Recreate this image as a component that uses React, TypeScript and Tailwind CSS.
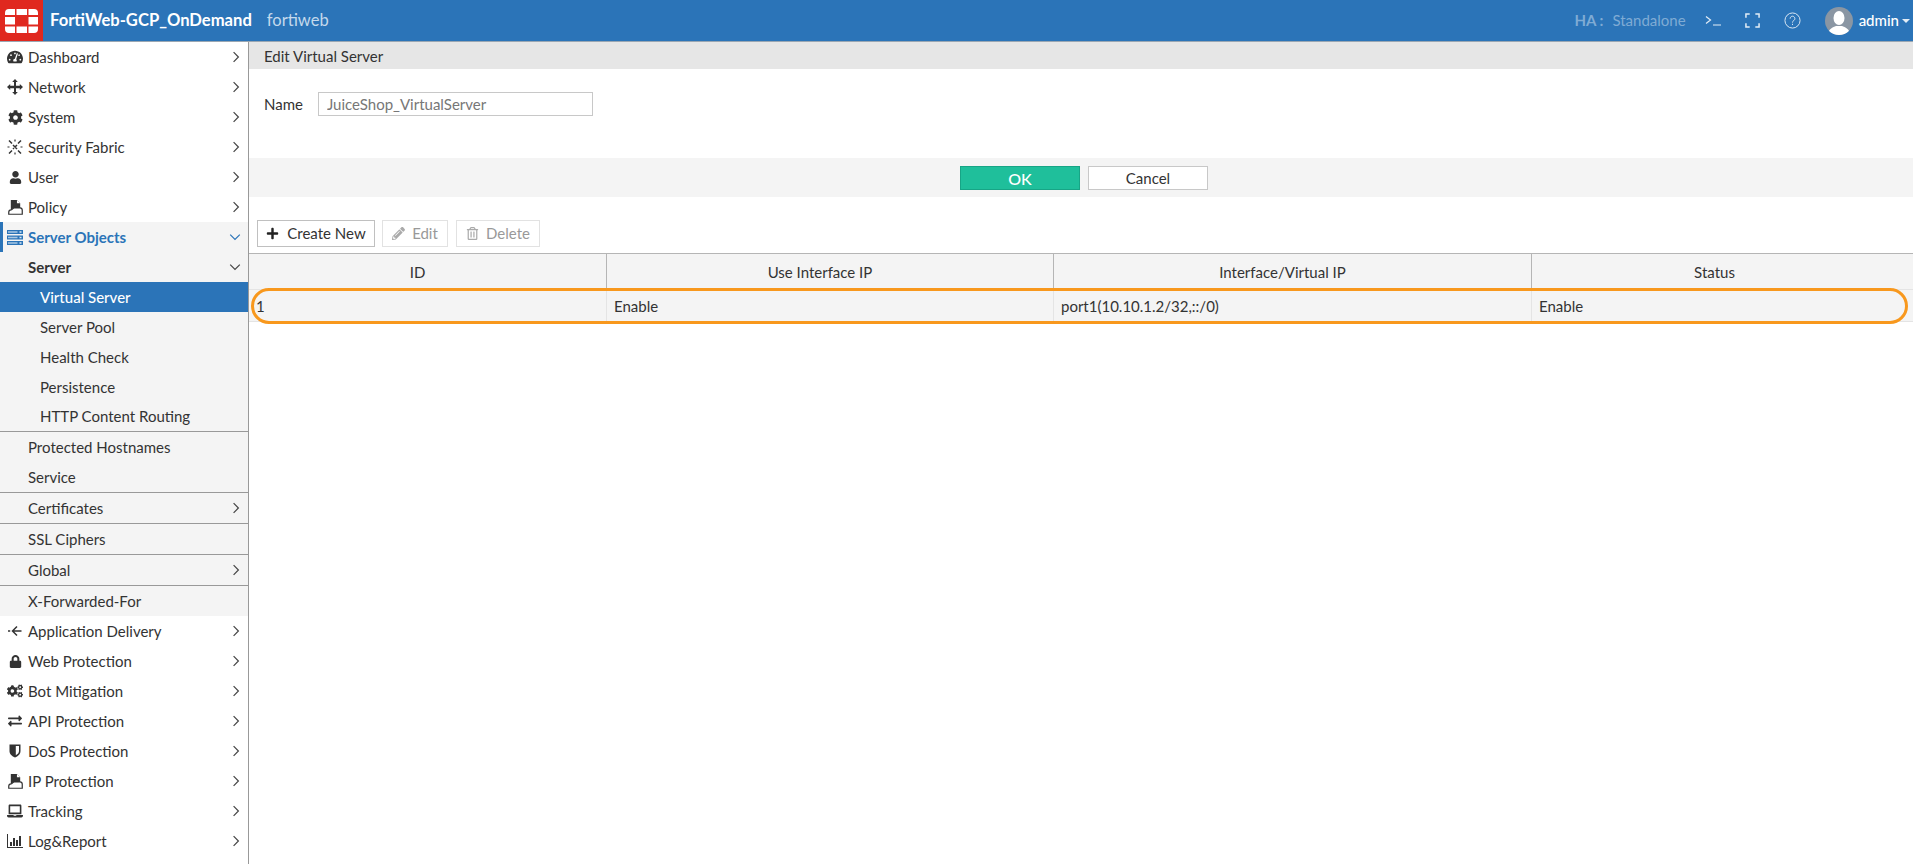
import React from "react";
import {
  FaCog,
  FaCogs,
  FaExchangeAlt,
  FaLaptop,
  FaLock,
  FaPencilAlt,
  FaPlus,
  FaRegTrashAlt,
  FaTachometerAlt,
  FaUser,
} from "react-icons/fa";

const Chevron = ({ down, className }: { down?: boolean; className?: string }) => (
  <svg viewBox="0 0 10 10" className={`w-[12px] h-[12px] ${className ?? "text-[#444]"}`} fill="none" stroke="currentColor" strokeWidth="1">
    {down ? <path d="M1 3l4 4 4-4" /> : <path d="M3 1l4 4-4 4" />}
  </svg>
);

const NetworkIcon = () => (
  <svg viewBox="0 0 16 16" className="w-[16px] h-[16px]" fill="#333">
    <path d="M8 0l2.800 3H9v3.800h3.800V5L16 8l-3.200 3V9.200H9V13h1.800L8 16l-2.800-3H7V9.200H3.200V11L0 8l3.200-3v1.800H7V3H5.200z" />
  </svg>
);

const FabricIcon = () => (
  <svg viewBox="0 0 16 16" className="w-[16px] h-[16px]" fill="none" stroke="#333" strokeWidth="1.500">
    <path d="M2 1.500l3 3M14 1.500l-3 3M2 14.500l3-3M14 14.500l-3-3M6 6l4 4M10 6l-2 2M6 10l1-1" />
    <path d="M8 .5v2M8 13.500v2M.5 8h2M13.500 8h2" strokeWidth="1.200" />
  </svg>
);

const PolicyIcon = () => (
  <svg viewBox="0 0 16 16" className="w-[15px] h-[15px]">
    <path d="M3 0h6.500L13 3.500V9H6.500C5.500 9 4.500 9.500 3 10.500z" fill="#333" />
    <path d="M9.500 0v3.500H13" fill="#fff" />
    <path d="M.8 15.200V13c0-1.500 1-2.500 2.500-2.500 1 0 2-2 3.500-2h6c1.500 0 2.400 1 2.400 2.500v4.200z" fill="#fff" stroke="#333" strokeWidth="1.300" />
  </svg>
);

const ServerIcon = () => (
  <svg viewBox="0 0 16 15" className="w-[16px] h-[15px]" fill="#2b74b8">
    <path d="M0 0h16v4H0zM0 5.500h16v4H0zM0 11h16v4H0z" />
    <path d="M1 1.300h9.500v1.400H1zM1 6.800h9.500v1.400H1zM1 12.300h9.500v1.400H1z" fill="#a9c8e4" />
    <path d="M12.500 1.300h2v1.400h-2zM12.500 6.800h2v1.400h-2zM12.500 12.300h2v1.400h-2z" fill="#dce8f3" />
  </svg>
);

const DeliveryIcon = () => (
  <svg viewBox="0 0 14 12" className="w-[14px] h-[12px]" fill="none" stroke="#333" strokeWidth="1.500">
    <path d="M0 6h2.200" />
    <path d="M13.500 6H5M9 1.500L4.500 6 9 10.500" />
  </svg>
);

const ShieldIcon = () => (
  <svg viewBox="0 0 12 14" className="w-[12px] h-[14px]">
    <path d="M.5 .5h11v6.500c0 3.200-2.600 5.400-5.500 6.500C3.100 12.400.5 10.200.5 7z" fill="#333" />
    <path d="M6.800 2h3.200v5c0 1.800-1.300 3.200-3.200 4.200z" fill="#fff" />
  </svg>
);

const ReportIcon = () => (
  <svg viewBox="0 0 16 14" className="w-[16px] h-[14px]" fill="#333">
    <path d="M0 0h1v13h15v1H0z" />
    <path d="M3 8h2v4H3zM6 4h2v8H6zM9 6h2v6H9zM12 2h2v10h-2z" />
  </svg>
);

const Logo = () => (
  <svg viewBox="0 0 33 24" className="w-[33px] h-[24px]" fill="#fff">
    <path d="M11.500 0h10.500v6H11.500zM11.500 17.500h10.500V24H11.500z" />
    <path d="M4 0h6v6H0V4a4 4 0 0 1 4-4zM23.500 0h5.500a4 4 0 0 1 4 4v2h-9.500zM0 17.500h10V24H4a4 4 0 0 1-4-4zM23.500 17.500H33V20a4 4 0 0 1-4 4h-5.500z" />
    <path d="M0 8h10v7.500H0zM23.500 8H33v7.500h-9.500z" />
  </svg>
);

type NavItem = { label: string; icon?: React.ReactNode };

const topItems: NavItem[] = [
  { label: "Dashboard", icon: <FaTachometerAlt className="text-[16px] text-[#333]" /> },
  { label: "Network", icon: <NetworkIcon /> },
  { label: "System", icon: <FaCog className="text-[15px] text-[#333]" /> },
  { label: "Security Fabric", icon: <FabricIcon /> },
  { label: "User", icon: <FaUser className="text-[13px] text-[#333]" /> },
  { label: "Policy", icon: <PolicyIcon /> },
];

const bottomItems: NavItem[] = [
  { label: "Application Delivery", icon: <DeliveryIcon /> },
  { label: "Web Protection", icon: <FaLock className="text-[13px] text-[#333]" /> },
  { label: "Bot Mitigation", icon: <FaCogs className="text-[16px] text-[#333]" /> },
  { label: "API Protection", icon: <FaExchangeAlt className="text-[14px] text-[#333]" /> },
  { label: "DoS Protection", icon: <ShieldIcon /> },
  { label: "IP Protection", icon: <PolicyIcon /> },
  { label: "Tracking", icon: <FaLaptop className="text-[16px] text-[#333]" /> },
  { label: "Log&Report", icon: <ReportIcon /> },
];

const NavRow = ({ item }: { item: NavItem }) => (
  <div className="h-[30px] flex items-center text-[#333]">
    <span className="w-[28px] pl-[7px] pr-[5px] flex items-center justify-center">{item.icon}</span>
    <span className="flex-1">{item.label}</span>
    <Chevron className="text-[#444] mr-[6px]" />
  </div>
);

const SubRow = ({ label }: { label: string }) => (
  <div className="h-[30px] flex items-center pl-[40px] text-[#333]">{label}</div>
);

const LevelRow = ({ label, arrow, border }: { label: string; arrow?: boolean; border?: boolean }) => (
  <div className={`h-[30px] box-content flex items-center pl-[28px] pr-[6px] text-[#333] ${border ? "border-b border-[#999]" : ""}`}>
    <span className="flex-1">{label}</span>
    {arrow && <Chevron />}
  </div>
);

const Sidebar = () => (
  <aside className="w-[249px] shrink-0 border-r border-[#999] bg-white overflow-hidden">
    {topItems.map((item) => (
      <NavRow key={item.label} item={item} />
    ))}
    <div className="bg-[#f4f4f4]">
      <div className="h-[30px] flex items-center border-l-[3px] border-[#2b74b8] text-[#2b74b8] font-bold">
        <span className="w-[25px] pl-[4px] flex items-center">
          <ServerIcon />
        </span>
        <span className="flex-1">Server Objects</span>
        <Chevron down className="text-[#2b74b8] mr-[7px]" />
      </div>
      <div className="h-[30px] flex items-center pl-[28px] pr-[7px] font-bold text-[#333]">
        <span className="flex-1">Server</span>
        <Chevron down />
      </div>
      <div className="h-[30px] flex items-center pl-[40px] bg-[#2b74b8] text-white font-medium">Virtual Server</div>
      <SubRow label="Server Pool" />
      <SubRow label="Health Check" />
      <SubRow label="Persistence" />
      <div className="h-[30px] flex items-center pl-[40px] text-[#333] border-b border-[#999]">HTTP Content Routing</div>
      <LevelRow label="Protected Hostnames" />
      <LevelRow label="Service" border />
      <LevelRow label="Certificates" arrow border />
      <LevelRow label="SSL Ciphers" border />
      <LevelRow label="Global" arrow border />
      <LevelRow label="X-Forwarded-For" />
    </div>
    {bottomItems.map((item) => (
      <NavRow key={item.label} item={item} />
    ))}
  </aside>
);

const Header = () => (
  <header className="h-[42px] shrink-0 flex items-center bg-[#2b74b8] border-b border-[#9aa7b3] text-white">
    <div className="w-[43px] h-full bg-[#e0281f] flex items-center justify-center">
      <Logo />
    </div>
    <span className="ml-[7px] text-[16.6px] font-bold">FortiWeb-GCP_OnDemand</span>
    <span className="ml-[15px] text-[16.5px] text-[#c4d9ec]">fortiweb</span>
    <div className="ml-auto flex items-center">
      <span className="text-[15px] text-[#7fabd4] font-bold">HA :</span>
      <span className="ml-[9px] text-[15px] text-[#7fabd4]">Standalone</span>
      <svg viewBox="0 0 16 10" className="ml-[19px] w-[16px] h-[10px]" fill="none" stroke="#e3edf6" strokeWidth="1.200">
        <path d="M1 .5L5.500 4 1 7.500M8 9h8" />
      </svg>
      <svg viewBox="0 0 16 16" className="ml-[24px] w-[15px] h-[15px]" fill="none" stroke="#e3edf6" strokeWidth="1.600">
        <path d="M1 5V1h4M11 1h4v4M15 11v4h-4M5 15H1v-4" />
      </svg>
      <svg viewBox="0 0 18 18" className="ml-[24px] w-[17px] h-[17px]" fill="none" stroke="#e3edf6" strokeWidth="1">
        <circle cx="9" cy="9" r="8" />
        <path d="M6.500 7a2.500 2.500 0 1 1 3.800 2.100C9.400 9.700 9 10.200 9 11.200M9 12.500v1.300" />
      </svg>
      <span className="ml-[24px] w-[28px] h-[28px] rounded-full bg-[#8a96a3] overflow-hidden flex items-center justify-center">
        <svg viewBox="0 0 28 28" className="w-[28px] h-[28px]" fill="#fff">
          <ellipse cx="14" cy="11" rx="5.500" ry="7" />
          <path d="M3 28c0-6 5-8 8-9h6c3 1 8 3 8 9z" />
        </svg>
      </span>
      <span className="ml-[6px] text-[15px] font-medium">admin</span>
      <span className="ml-[3px] mr-[3px] w-0 h-0 border-x-[4px] border-x-transparent border-t-[4px] border-t-[#e3edf6]" />
    </div>
  </header>
);

const columns = [
  { title: "ID", value: "1", width: "w-[358px]", headPad: "pr-[20px]" },
  { title: "Use Interface IP", value: "Enable", width: "w-[447px]", headPad: "pr-[20px]" },
  { title: "Interface/Virtual IP", value: "port1(10.10.1.2/32,::/0)", width: "w-[478px]", headPad: "pr-[20px]" },
  { title: "Status", value: "Enable", width: "flex-1", headPad: "pr-[16px]" },
];

const Table = () => (
  <div className="mt-[6px]">
    <div className="flex h-[36px] bg-[#f4f4f4] border-t border-[#b5b5b5]">
      {columns.map((c, i) => (
        <div key={c.title} className={`${c.width} ${c.headPad} flex items-center justify-center pt-[2px] ${i < 3 ? "border-r border-[#b5b5b5]" : ""}`}>
          {c.title}
        </div>
      ))}
    </div>
    <div className="relative flex h-[33px] bg-[#f4f4f4] border-y border-[#e4e4e4]">
      {columns.map((c, i) => (
        <div key={c.title} className={`${c.width} flex items-center pl-[7px] pt-[2px] ${i < 3 ? "border-r border-[#e4e4e4]" : ""}`}>
          {c.value}
        </div>
      ))}
      <div className="absolute left-[2px] right-[5px] top-[-2px] bottom-[-3px] rounded-full border-[3.5px] border-[#f8981d]" />
    </div>
  </div>
);

export default function App() {
  return (
    <div className="w-[1913px] h-[864px] flex flex-col overflow-hidden bg-white text-[15px] text-[#333] font-['Lato','Liberation_Sans',sans-serif]">
      <Header />
      <div className="flex-1 flex min-h-0">
        <Sidebar />
        <main className="flex-1 min-w-0">
          <div className="h-[27px] bg-[#e6e6e6] flex items-center pl-[15px] pt-px">Edit Virtual Server</div>
          <div className="h-[89px] flex items-start pl-[15px] pt-[23px]">
            <span className="h-[24px] flex items-center">Name</span>
            <input
              readOnly
              value="JuiceShop_VirtualServer"
              className="ml-[15px] w-[275px] h-[24px] border border-[#c8c8c8] px-[8px] text-[15px] text-[#777] outline-none"
            />
          </div>
          <div className="h-[39px] bg-[#f4f4f4] flex items-center justify-center gap-[8px] pl-[6px]">
            <button className="w-[120px] h-[24px] pb-px bg-[#1fbf9b] border border-[#17a586] text-white text-[16px] font-medium">OK</button>
            <button className="w-[120px] h-[24px] bg-white border border-[#c8c8c8]">Cancel</button>
          </div>
          <div className="mt-[23px] pl-[8px] flex gap-[7px]">
            <button className="h-[27px] w-[118px] flex items-center justify-center gap-[8px] bg-white border border-[#c0c0c0]">
              <FaPlus className="text-[13px] text-[#222]" />
              Create New
            </button>
            <button className="h-[27px] w-[66px] flex items-center justify-center gap-[7px] border border-[#e2e2e2] text-[#999]">
              <FaPencilAlt className="text-[13px] text-[#aaa]" />
              Edit
            </button>
            <button className="h-[27px] w-[84px] ml-px flex items-center justify-center gap-[7px] border border-[#e2e2e2] text-[#999]">
              <FaRegTrashAlt className="text-[13px] text-[#aaa]" />
              Delete
            </button>
          </div>
          <Table />
        </main>
      </div>
    </div>
  );
}
